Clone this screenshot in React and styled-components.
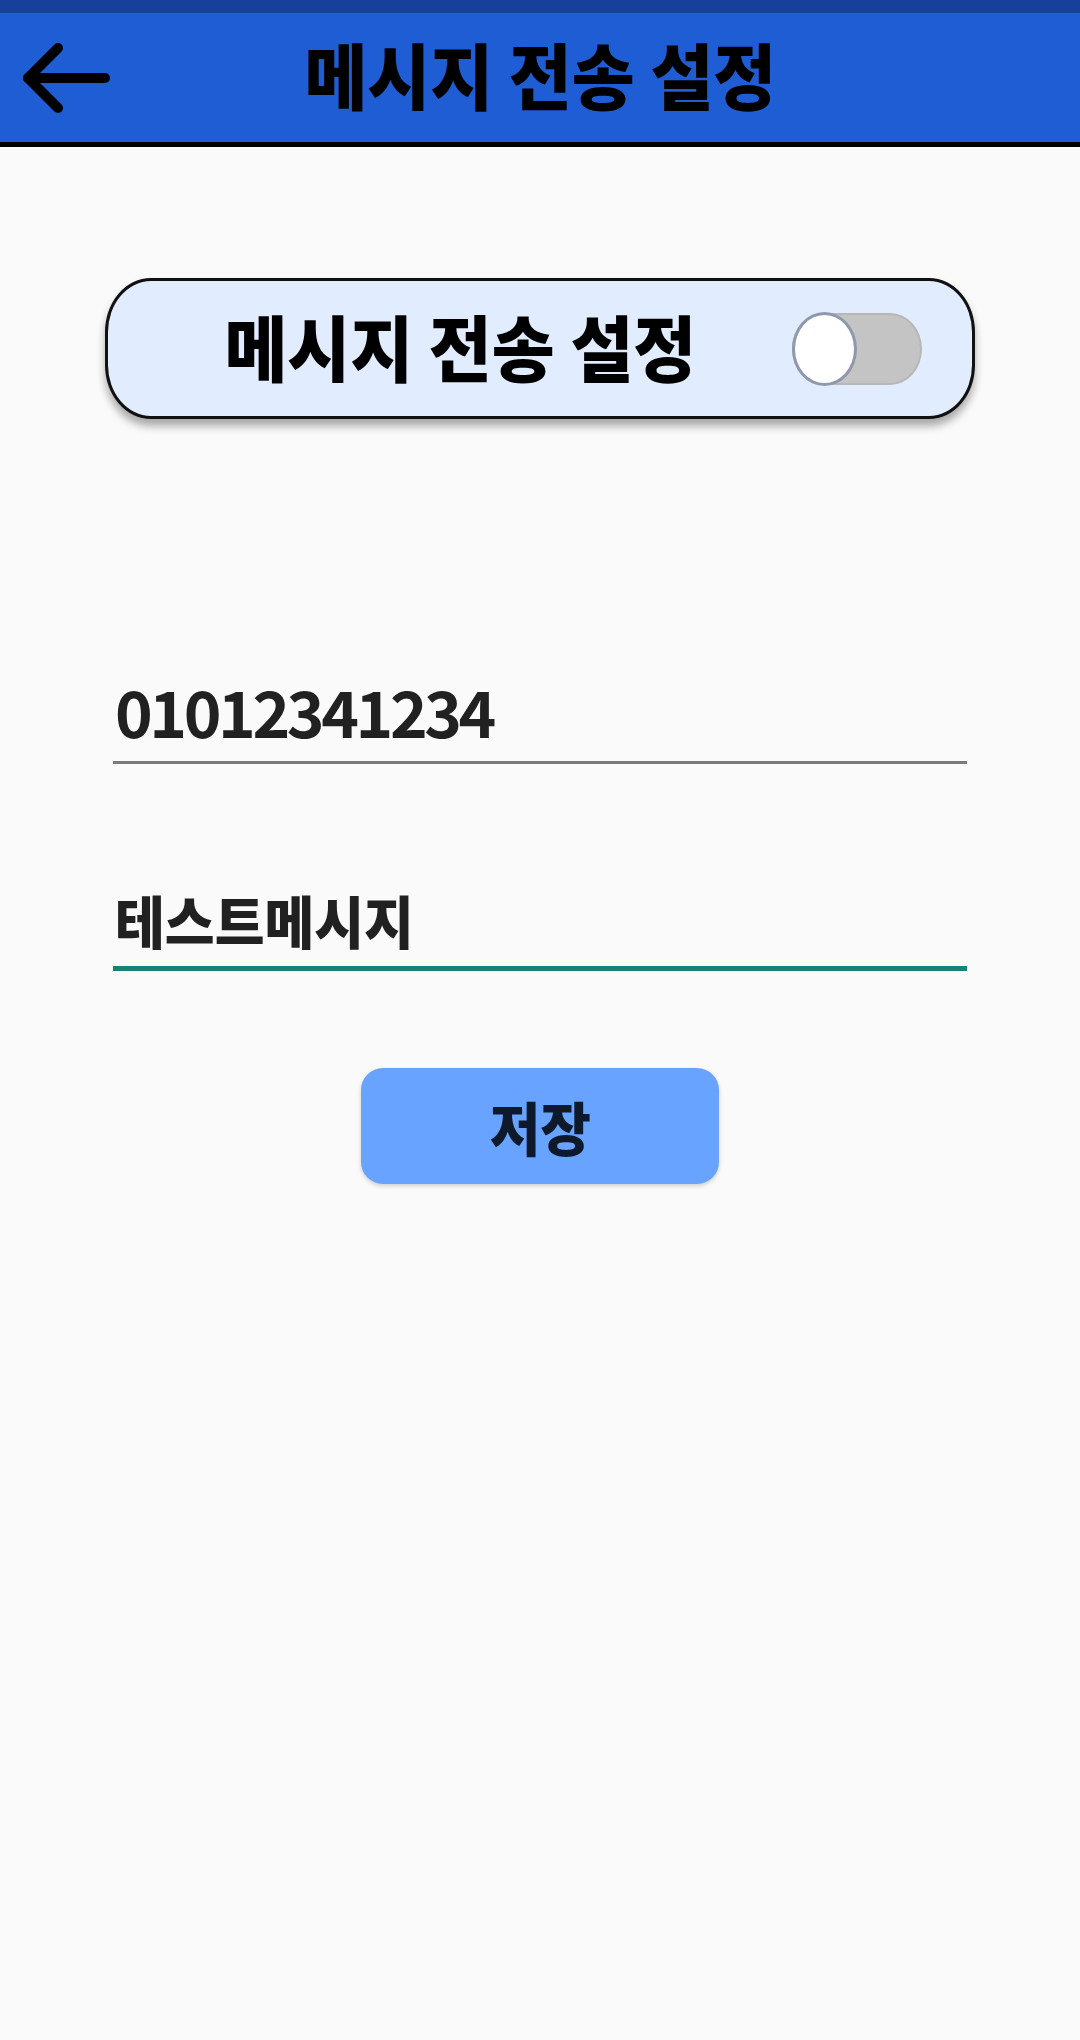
import React, { useState } from "react";
import styled, { createGlobalStyle } from "styled-components";

const GlobalStyle = createGlobalStyle`
  html, body {
    margin: 0;
    padding: 0;
    background: #fafafa;
  }
  body {
    font-family: "Noto Sans CJK KR", "Noto Sans", sans-serif;
  }
  * {
    box-sizing: border-box;
  }
`;

const Screen = styled.div`
  width: 1080px;
  min-height: 2040px;
  background: #fafafa;
`;

const StatusBar = styled.div`
  height: 13px;
  background: #173f9c;
`;

const AppBar = styled.header`
  height: 134px;
  background: #1f5dd4;
  border-bottom: 5px solid #000;
  display: grid;
  grid-template-columns: 1fr auto 1fr;
  align-items: center;
`;

const BackButton = styled.button`
  justify-self: start;
  margin-left: 22px;
  width: 88px;
  height: 70px;
  padding: 0;
  border: none;
  background: transparent;
  display: flex;
  cursor: pointer;
`;

const Condensed = styled.span`
  display: inline-block;
  font-family: "Noto Sans CJK KR", "Noto Sans", sans-serif;
  font-weight: 900;
  font-size: ${(p) => p.size}px;
  line-height: 1;
  color: ${(p) => p.color || "#000"};
  transform: scaleX(0.95);
  transform-origin: ${(p) => (p.left ? "left center" : "center")};
  white-space: nowrap;
`;

const Title = styled.h1`
  margin: 0 0 10px;
  display: flex;
  justify-content: center;
`;

const Content = styled.main`
  padding-top: 131px;
  display: flex;
  flex-direction: column;
  align-items: center;
`;

const Card = styled.section`
  width: 870px;
  height: 141px;
  background: #e1edfe;
  border: 3px solid #111;
  border-radius: 46px / 54px;
  box-shadow: 0 7px 8px rgba(0, 0, 0, 0.33);
  display: flex;
  align-items: center;
  padding-right: 50px;
`;

const CardLabel = styled.div`
  flex: 1;
  display: flex;
  justify-content: center;
  padding-left: 20px;
  padding-bottom: 8px;
`;

const Track = styled.button`
  width: 130px;
  height: 72px;
  padding: 0;
  background: #c4c4c4;
  border: 2px solid #b7b7b7;
  border-radius: 32px / 36px;
  display: flex;
  align-items: center;
  justify-content: ${(p) => (p.on ? "flex-end" : "flex-start")};
  cursor: pointer;
`;

const Thumb = styled.span`
  width: 65px;
  height: 74px;
  margin: -2px;
  border-radius: 50%;
  background: #fff;
  border: 3px solid #8f99ac;
`;

const Form = styled.div`
  width: 854px;
  margin-top: 259px;
  display: flex;
  flex-direction: column;
`;

const Field = styled.div`
  border-bottom: ${(p) => (p.active ? "5px solid #17827a" : "3px solid #7b7b7b")};
  padding: 0 0 ${(p) => (p.active ? 17 : 18)}px 2px;
  margin-bottom: ${(p) => p.gap || 0}px;
`;

const Digits = styled.span`
  display: inline-block;
  font-family: "Noto Sans CJK KR", "Noto Sans", sans-serif;
  font-weight: 700;
  font-size: 64px;
  line-height: 1;
  color: #212121;
  letter-spacing: -3.4px;
`;

const SaveButton = styled.button`
  margin-top: 97px;
  width: 358px;
  height: 116px;
  border: none;
  border-radius: 22px;
  background: #67a3ff;
  box-shadow: 0 2px 4px rgba(0, 0, 0, 0.18);
  display: flex;
  align-items: center;
  justify-content: center;
  cursor: pointer;
`;

const ArrowIcon = () => (
  <svg width="88" height="70" viewBox="0 0 88 70">
    <g fill="none" stroke="#000" strokeWidth="10" strokeLinecap="round" strokeLinejoin="round">
      <path d="M83 35 H6" />
      <path d="M36 5 L6 35 L36 65" />
    </g>
  </svg>
);

export default function App() {
  const [enabled, setEnabled] = useState(false);

  return (
    <Screen>
      <GlobalStyle />
      <StatusBar />
      <AppBar>
        <BackButton aria-label="뒤로">
          <ArrowIcon />
        </BackButton>
        <Title>
          <Condensed size={72}>메시지 전송 설정</Condensed>
        </Title>
        <div />
      </AppBar>
      <Content>
        <Card>
          <CardLabel>
            <Condensed size={72}>메시지 전송 설정</Condensed>
          </CardLabel>
          <Track on={enabled ? 1 : 0} onClick={() => setEnabled(!enabled)}>
            <Thumb />
          </Track>
        </Card>
        <Form>
          <Field gap={127}>
            <Digits>01012341234</Digits>
          </Field>
          <Field active>
            <Condensed size={57} color="#212121" left>
              테스트메시지
            </Condensed>
          </Field>
        </Form>
        <SaveButton>
          <Condensed size={58} color="#0e1a2c">저장</Condensed>
        </SaveButton>
      </Content>
    </Screen>
  );
}
